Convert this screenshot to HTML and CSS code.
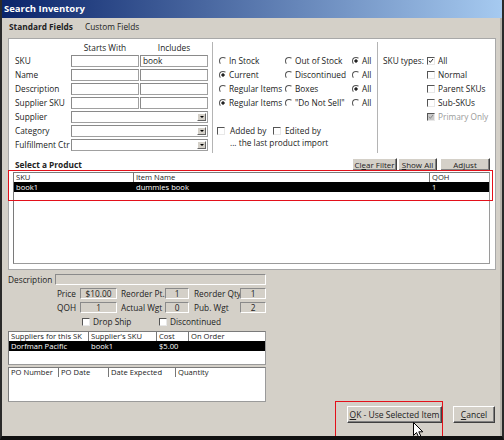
FILE: index.html
```html
<!DOCTYPE html>
<html lang="en">

<head>
    <meta charset="UTF-8">
    <title>Search Inventory</title>
    <link rel="stylesheet" href="styles.css">
</head>

<body>
    <div class="window">
        <div class="titlebar">Search Inventory</div>
        <div class="tabs">
            <span class="tab active">Standard Fields</span>
            <span class="tab">Custom Fields</span>
        </div>

        <div class="panel">
            <div class="filters">
                <div class="col fields">
                    <span></span>
                    <span class="head">Starts With</span>
                    <span class="head">Includes</span>

                    <label>SKU</label><span class="input"></span><span class="input">book</span>
                    <label>Name</label><span class="input"></span><span class="input"></span>
                    <label>Description</label><span class="input"></span><span class="input"></span>
                    <label>Supplier SKU</label><span class="input"></span><span class="input"></span>
                    <label>Supplier</label><span class="input select"><i class="drop"></i></span>
                    <label>Category</label><span class="input select"><i class="drop"></i></span>
                    <label>Fulfillment Ctr</label><span class="input select"><i class="drop"></i></span>
                </div>

                <div class="col status">
                    <div class="radios">
                        <span class="opt"><i class="radio"></i>In Stock</span>
                        <span class="opt"><i class="radio"></i>Out of Stock</span>
                        <span class="opt"><i class="radio on"></i>All</span>

                        <span class="opt"><i class="radio on"></i>Current</span>
                        <span class="opt"><i class="radio"></i>Discontinued</span>
                        <span class="opt"><i class="radio"></i>All</span>

                        <span class="opt"><i class="radio"></i>Regular Items</span>
                        <span class="opt"><i class="radio"></i>Boxes</span>
                        <span class="opt"><i class="radio on"></i>All</span>

                        <span class="opt"><i class="radio on"></i>Regular Items</span>
                        <span class="opt"><i class="radio"></i>"Do Not Sell"</span>
                        <span class="opt"><i class="radio"></i>All</span>
                    </div>
                    <div class="imported">
                        <span class="opt"><i class="check"></i>Added by</span>
                        <span class="opt"><i class="check"></i>Edited by</span>
                    </div>
                    <div class="import_note">... the last product import</div>
                </div>

                <div class="col skutypes">
                    <span class="sku_label">SKU types:</span>
                    <span class="opt"><i class="check"><svg viewBox="0 0 9 9"><path d="M1.5 4 L3.5 6.5 L7.5 1.5" /></svg></i>All</span>
                    <span class="opt"><i class="check"></i>Normal</span>
                    <span class="opt"><i class="check"></i>Parent SKUs</span>
                    <span class="opt"><i class="check"></i>Sub-SKUs</span>
                    <span class="opt disabled"><i class="check"><svg viewBox="0 0 9 9"><path d="M1.5 4 L3.5 6.5 L7.5 1.5" /></svg></i>Primary Only</span>
                </div>
            </div>

            <div class="listbar">
                <span class="list_title">Select a Product</span>
                <div class="list_btns">
                    <button class="btn w_clear">Cl<u>e</u>ar Filter</button>
                    <button class="btn w_show"><u>S</u>how All</button>
                    <button class="btn w_adjust">Adjust</button>
                </div>
            </div>

            <div class="list products">
                <div class="lhead">
                    <span class="c_sku">SKU</span>
                    <span class="c_name">Item Name</span>
                    <span class="c_qoh">QOH</span>
                </div>
                <div class="lrow sel">
                    <span class="c_sku">book1</span>
                    <span class="c_name">dummies book</span>
                    <span class="c_qoh">1</span>
                </div>
            </div>
        </div>

        <div class="details">
            <div class="desc_row">
                <label>Description</label>
                <span class="field"></span>
            </div>
            <div class="stats">
                <label>Price</label><span class="field">$10.00</span>
                <label>Reorder Pt.</label><span class="field">1</span>
                <label>Reorder Qty</label><span class="field">1</span>

                <label>QOH</label><span class="field">1</span>
                <label>Actual Wgt</label><span class="field">0</span>
                <label>Pub. Wgt</label><span class="field">2</span>
            </div>
            <div class="flags">
                <span class="opt"><i class="check"></i>Drop Ship</span>
                <span class="opt"><i class="check"></i>Discontinued</span>
            </div>

            <div class="list suppliers">
                <div class="lhead">
                    <span class="s1">Suppliers for this SK</span>
                    <span class="s2">Supplier's SKU</span>
                    <span class="s3">Cost</span>
                    <span class="s4">On Order</span>
                </div>
                <div class="lrow sel">
                    <span class="s1">Dorfman Pacific</span>
                    <span class="s2">book1</span>
                    <span class="s3">$5.00</span>
                    <span class="s4"></span>
                </div>
            </div>

            <div class="list orders">
                <div class="lhead">
                    <span class="p1">PO Number</span>
                    <span class="p2">PO Date</span>
                    <span class="p3">Date Expected</span>
                    <span class="p4">Quantity</span>
                </div>
            </div>
        </div>

        <div class="footer">
            <button class="btn big w_ok"><u>O</u>K - Use Selected Item</button>
            <button class="btn big w_cancel"><u>C</u>ancel</button>
        </div>

        <!-- highlight marks drawn over the dialog -->
        <div class="mark mark_list"></div>
        <div class="mark mark_ok"></div>
        <svg class="cursor" viewBox="0 0 11 17" width="11" height="17">
            <path d="M0.5 0.5 L0.5 13.5 L3.5 10.5 L6 16 L8.2 15 L5.8 9.8 L9.8 9.8 Z" />
        </svg>
    </div>
</body>

</html>
```

FILE: styles.css
```css
* {
    box-sizing: border-box;
}

body {
    margin: 0;
    padding: 0;
    background-color: #d4d0c8;
    font-family: "Open Sans", "DejaVu Sans", sans-serif;
    font-size: 8.3px;
    color: #222;
}

.window {
    position: relative;
    width: 504px;
    height: 440px;
    border-left: 2px solid #2a2a2a;
    border-right: 2px solid #2a2a2a;
    border-bottom: 4px solid #111;
    box-shadow: inset -2px 0 0 #b8b4ac;
    background-color: #d4d0c8;
    overflow: hidden;
}

.titlebar {
    height: 18px;
    line-height: 18px;
    padding-left: 2px;
    background: linear-gradient(to right, #0a246a, #a6caf0);
    color: #fff;
    font-weight: bold;
    font-size: 9.5px;
}

.tabs {
    height: 20px;
    line-height: 18px;
    padding-left: 7px;
    display: flex;
    gap: 12px;
}

.tab.active {
    font-weight: bold;
}

/* white search panel */

.panel {
    margin-left: 6px;
    width: 488px;
    height: 232px;
    background-color: #fff;
    border: 1px solid #a8a8a8;
}

.filters {
    display: flex;
    margin-top: 3px;
    height: 111px;
}

.col {
    height: 111px;
}

.fields {
    width: 203px;
    padding-left: 6px;
    display: grid;
    grid-template-columns: 55px 68px 68px;
    grid-template-rows: 11px repeat(7, 12px);
    column-gap: 1px;
    row-gap: 2px;
    align-content: start;
}

.fields label {
    line-height: 12px;
    white-space: nowrap;
}

.head {
    text-align: center;
    line-height: 11px;
}

.input {
    position: relative;
    border: 1px solid #a0a0a0;
    border-top-color: #8a8a8a;
    border-left-color: #8a8a8a;
    background-color: #fff;
    line-height: 10px;
    padding-left: 2px;
}

.select {
    grid-column: span 2;
}

.drop {
    position: absolute;
    right: 1px;
    top: 1px;
    width: 9px;
    height: 8px;
    background-color: #d4d0c8;
    border: 1px solid;
    border-color: #fff #666 #666 #fff;
}

.drop::after {
    content: "";
    position: absolute;
    left: 2px;
    top: 2px;
    border-left: 2px solid transparent;
    border-right: 2px solid transparent;
    border-top: 2px solid #000;
}

.status {
    width: 165px;
    border-left: 1px solid #b4b4b4;
    padding-left: 6px;
    padding-top: 13px;
}

.radios {
    display: grid;
    grid-template-columns: 66px 67px auto;
    grid-auto-rows: 12px;
    row-gap: 2px;
}

.opt {
    display: flex;
    align-items: center;
    gap: 2px;
    white-space: nowrap;
    line-height: 12px;
}

.radio {
    width: 8px;
    height: 8px;
    border-radius: 50%;
    border: 1px solid;
    border-color: #555 #fff #fff #555;
    background-color: #fff;
    flex: none;
}

.radio.on {
    background: radial-gradient(circle, #222 1.3px, #fff 2px);
}

.check {
    width: 8px;
    height: 8px;
    border: 1px solid;
    border-width: 1.5px 1px 1px 1.5px;
    border-color: #555 #e8e8e8 #e8e8e8 #555;
    background-color: #fff;
    flex: none;
    display: flex;
}

.check svg {
    width: 100%;
    height: 100%;
}

.check svg path {
    fill: none;
    stroke: #222;
    stroke-width: 1.5;
}

.disabled {
    color: #9a9a9a;
}

.disabled .check {
    background-color: #c8c8c8;
}

.disabled .check svg path {
    stroke: #8a8a8a;
}

.imported {
    display: flex;
    margin-top: 16px;
    margin-left: -2px;
}

.imported .opt {
    width: 56px;
    gap: 5px;
}

.imported .opt + .opt {
    gap: 4px;
}

.import_note {
    line-height: 12px;
    padding-left: 11px;
}

.skutypes {
    flex: 1;
    border-left: 1px solid #b4b4b4;
    padding-left: 5px;
    padding-top: 13px;
    display: grid;
    grid-template-columns: 44px auto;
    grid-auto-rows: 12px;
    row-gap: 2px;
    align-content: start;
}

.sku_label {
    line-height: 12px;
}

.skutypes .opt {
    grid-column: 2;
    gap: 3px;
}

.skutypes .opt:first-of-type {
    grid-row: 1;
}

/* product list */

.listbar {
    height: 18px;
    display: flex;
    justify-content: space-between;
    align-items: flex-end;
    padding-left: 6px;
    padding-right: 5px;
}

.list_title {
    font-weight: bold;
    line-height: 12px;
}

.list_btns {
    display: flex;
    gap: 1px;
}

.btn {
    font-family: "Open Sans", "DejaVu Sans", sans-serif;
    font-size: 8px;
    color: #222;
    background-color: #d4d0c8;
    border: 1px solid;
    border-color: #fff #404040 #404040 #fff;
    box-shadow: inset -1px -1px 0 #808080;
    padding: 0;
    height: 13px;
    line-height: 10px;
}

.w_clear {
    width: 45px;
}

.w_show {
    width: 39px;
    margin-right: 2px;
}

.w_adjust {
    width: 50px;
}

.list {
    background-color: #fff;
    border: 1px solid #9a9a9a;
    border-top-color: #7a7a7a;
    border-left-color: #7a7a7a;
    font-size: 7.6px;
}

.products {
    margin: 1px 5px 0 4px;
    height: 92px;
}

.lhead,
.lrow {
    display: flex;
    white-space: nowrap;
}

.lhead {
    height: 9px;
    line-height: 9px;
}

.lhead span {
    border-right: 1px solid #777;
    padding-left: 2px;
    overflow: hidden;
}

.lhead span:last-child {
    border-right: none;
}

.lrow {
    height: 10px;
    line-height: 10px;
}

.lrow span {
    padding-left: 2px;
    overflow: hidden;
}

.lrow.sel {
    background-color: #000;
    color: #fff;
}

.c_sku {
    width: 120px;
}

.c_name {
    width: 296px;
}

.c_qoh {
    flex: 1;
}

/* details below the panel */

.details {
    margin-left: 6px;
    width: 258px;
    padding-top: 4px;
}

.desc_row {
    display: flex;
    height: 11px;
}

.desc_row label {
    width: 47px;
    line-height: 11px;
}

.field {
    border: 1px solid;
    border-color: #8a8a8a #fff #fff #8a8a8a;
    background-color: #d4d0c8;
    text-align: center;
    line-height: 9px;
}

.desc_row .field {
    flex: 1;
}

.stats {
    margin-top: 3px;
    display: grid;
    grid-template-columns: 72px 37px 48px 24px 51px 26px;
    grid-auto-rows: 11px;
    row-gap: 3px;
}

.stats label {
    line-height: 11px;
    white-space: nowrap;
}

.stats label:nth-child(6n+1) {
    text-align: right;
    padding-right: 4px;
}

.stats label:nth-child(6n+3) {
    padding-left: 4px;
}

.stats label:nth-child(6n+5) {
    padding-left: 5px;
}

.flags {
    display: flex;
    margin-top: 3px;
    padding-left: 74px;
    height: 11px;
}

.flags .opt {
    gap: 3px;
    line-height: 11px;
}

.flags .opt:first-child {
    width: 77px;
}

.suppliers {
    margin-top: 4px;
    height: 34px;
}

.orders {
    margin-top: 2px;
    height: 35px;
}

.s1 {
    width: 80px;
}

.s2 {
    width: 68px;
}

.s3 {
    width: 32px;
}

.s4 {
    flex: 1;
}

.p1 {
    width: 50px;
}

.p2 {
    width: 50px;
}

.p3 {
    width: 67px;
}

.p4 {
    flex: 1;
}

/* bottom buttons */

.footer {
    position: absolute;
    left: 0;
    right: 0;
    top: 406px;
    display: flex;
    justify-content: flex-end;
    gap: 11px;
    padding-right: 7px;
}

.btn.big {
    height: 17px;
    font-size: 8.5px;
    line-height: 14px;
}

.w_ok {
    width: 95px;
}

.w_cancel {
    width: 42px;
}

.mark {
    position: absolute;
    border: 1px solid #e3101a;
}

.mark_list {
    left: 6px;
    top: 170px;
    width: 485px;
    height: 31px;
}

.mark_ok {
    left: 333px;
    top: 401px;
    width: 108px;
    height: 36px;
}

.cursor {
    position: absolute;
    left: 411px;
    top: 422px;
}

.cursor path {
    fill: #fff;
    stroke: #000;
    stroke-width: 1;
}
```
